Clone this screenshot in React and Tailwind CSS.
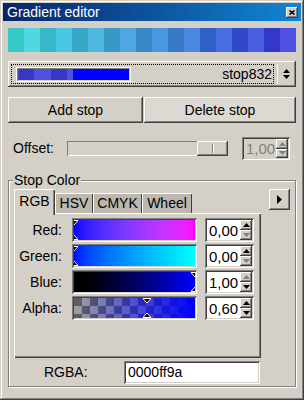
const raised =
  "shadow-[inset_-1px_-1px_0_#404040,inset_1px_1px_0_#ffffff,inset_-2px_-2px_0_#808080,inset_2px_2px_0_#d4d0c8]";
const sunken =
  "shadow-[inset_1px_1px_0_#808080,inset_-1px_-1px_0_#ffffff,inset_2px_2px_0_#404040,inset_-2px_-2px_0_#d4d0c8]";

const stripColors = [
  "#38c8c8", "#50d8e0", "#38b8c8", "#48c8e0", "#38a8c8", "#50b8e0",
  "#3898c8", "#50a8e0", "#3888c8", "#4898e0", "#3878c8", "#4888e0",
  "#3060c8", "#4870e0", "#3048c8", "#4860e0", "#3438c8", "#5050e0",
];

function Arrow({ up, grey }) {
  return (
    <svg width="7" height="4" viewBox="0 0 7 4">
      <polygon
        points={up ? "3.5,0 7,4 0,4" : "0,0 7,0 3.5,4"}
        fill={grey ? "#808080" : "#000"}
      />
    </svg>
  );
}

function SpinBox({ value, upGrey, downGrey, disabled, w = "w-[49px]", h = "h-[24px]" }) {
  return (
    <div className={`flex ${w} ${h} p-[2px] ${sunken} ${disabled ? "bg-[#d4d0c8] text-[#808080]" : "bg-white text-black"}`}>
      <div className="flex-1 flex items-center pl-[2px] text-[15px] leading-none">{value}</div>
      <div className="flex flex-col w-[12px]">
        <div className={`flex-1 flex items-center justify-center bg-[#d4d0c8] ${raised}`}>
          <Arrow up grey={disabled || upGrey} />
        </div>
        <div className={`flex-1 flex items-center justify-center bg-[#d4d0c8] ${raised}`}>
          <Arrow grey={disabled || downGrey} />
        </div>
      </div>
    </div>
  );
}

function Marker({ pos }) {
  return (
    <>
      <svg className="absolute top-0 -translate-x-1/2" style={{ left: pos }} width="9" height="6" viewBox="0 0 9 6">
        <polygon points="0.5,0.5 8.5,0.5 4.5,5" fill="#000" stroke="#fff" strokeWidth="1" />
      </svg>
      <svg className="absolute bottom-0 -translate-x-1/2" style={{ left: pos }} width="9" height="6" viewBox="0 0 9 6">
        <polygon points="4.5,1 8.5,5.5 0.5,5.5" fill="#000" stroke="#fff" strokeWidth="1" />
      </svg>
    </>
  );
}

function ColorRow({ label, bar, pos, spin }) {
  return (
    <div className="flex items-center h-[24px]">
      <div className="w-[48px] text-right text-[14px]">{label}</div>
      <div className={`ml-[10px] w-[125px] h-[24px] p-[2px] ${sunken}`}>
        <div className="relative w-full h-full overflow-hidden">
          {bar}
          <Marker pos={pos} />
        </div>
      </div>
      <div className="ml-[8px]">{spin}</div>
    </div>
  );
}

export default function App() {
  return (
    <div
      className={`w-[304px] h-[400px] bg-[#d4d0c8] p-[3px] flex flex-col text-black shadow-[inset_-1px_-1px_0_#404040,inset_1px_1px_0_#d4d0c8,inset_-2px_-2px_0_#808080,inset_2px_2px_0_#ffffff]`}
      style={{ fontFamily: '"Liberation Sans", Arial, sans-serif' }}
    >
      {/* title bar */}
      <div className="h-[18px] flex items-center justify-between pl-[4px] pr-[3px] bg-gradient-to-r from-[#0a246a] to-[#1286d4]">
        <span className="text-white text-[14px] leading-none">Gradient editor</span>
        <div className={`w-[12px] h-[11px] flex items-center justify-center bg-[#d4d0c8] ${raised}`}>
          <svg width="6" height="5" viewBox="0 0 6 5">
            <path d="M0.5 0.5 L5.5 4.5 M5.5 0.5 L0.5 4.5" stroke="#000" strokeWidth="1.6" />
          </svg>
        </div>
      </div>

      <div className="flex-1 flex flex-col px-[5px] pt-[7px]">
        {/* gradient stops strip */}
        <div className="flex h-[24px]">
          {stripColors.map((c, i) => (
            <div key={i} className="w-[16px] h-full" style={{ backgroundColor: c }} />
          ))}
        </div>

        {/* stop combo */}
        <div className={`mt-[9px] h-[26px] flex items-center bg-[#d4d0c8] ${raised}`}>
          <div className="ml-[3px] w-[263px] h-[20px] border border-dotted border-black flex items-center">
            <div className="ml-[4px] w-[115px] h-[15px] border border-white shadow-[inset_1px_1px_0_#808080] p-[1px] flex">
              <div className="w-[1px] bg-[#4848d8]" />
              <div className="w-[15px] bg-[#3838c8]" />
              <div className="w-[17px] bg-[#5050e0]" />
              <div className="w-[16px] bg-[#3838c8]" />
              <div className="w-[6px] bg-[#5050e0]" />
              <div className="flex-1 bg-[#0000ff]" />
            </div>
            <span className="ml-auto pr-[1px] text-[14px]">stop832</span>
          </div>
          <div className="ml-[3px] w-[1px] h-[20px] bg-white" />
          <div className="flex-1 flex flex-col items-center justify-center gap-[2px] pr-[2px]">
            <Arrow up />
            <Arrow />
          </div>
        </div>

        {/* buttons */}
        <div className="mt-[10px] flex gap-[1px] h-[26px]">
          <button className={`w-[135px] h-full text-[14px] bg-[#d4d0c8] ${raised}`}>Add stop</button>
          <button className={`flex-1 h-full text-[14px] bg-[#dcd9d2] ${raised}`}>Delete stop</button>
        </div>

        {/* offset */}
        <div className="mt-[14px] flex items-center h-[23px]">
          <span className="pl-[5px] w-[59px] text-[14px] text-black">Offset:</span>
          <div className="w-[161px] h-[15px] bg-[#d4d0c8] shadow-[inset_1px_1px_0_#808080,inset_-1px_-1px_0_#ffffff] flex justify-end">
            <div className={`w-[31px] h-full bg-[#d4d0c8] ${raised} flex items-center justify-center`}>
              <div className="w-[1px] h-[9px] bg-[#808080] shadow-[1px_0_0_#ffffff]" />
            </div>
          </div>
          <div className="ml-[14px]">
            <SpinBox value="1,00" disabled w="w-[48px]" h="h-[23px]" />
          </div>
        </div>

        {/* stop color group */}
        <div className="relative mt-[20px] h-[207px] border border-[#808080] shadow-[inset_1px_1px_0_#ffffff,1px_1px_0_#ffffff] pl-[5px] flex flex-col">
          <span className="absolute -top-[9px] left-[4px] px-[1px] bg-[#d4d0c8] text-[14px] leading-[16px]">Stop Color</span>

          <div className="flex mt-[8px]">
            <div className="w-[247px] flex flex-col">
              {/* tabs */}
              <div className="flex items-end h-[24px]">
                <div className="relative z-10 w-[41px] h-[26px] -mb-[2px] bg-[#d4d0c8] shadow-[inset_1px_1px_0_#ffffff,inset_-1px_0_0_#404040,inset_-2px_0_0_#808080] flex items-center justify-center text-[14px] pb-[2px]">RGB</div>
                <div className="w-[38px] h-[20px] bg-[#bcb8b0] shadow-[inset_1px_1px_0_#ffffff,inset_-1px_0_0_#404040] flex items-center justify-center text-[14px]">HSV</div>
                <div className="w-[49px] h-[20px] bg-[#bcb8b0] shadow-[inset_1px_1px_0_#ffffff,inset_-1px_0_0_#404040] flex items-center justify-center text-[14px]">CMYK</div>
                <div className="w-[50px] h-[20px] bg-[#bcb8b0] shadow-[inset_1px_1px_0_#ffffff,inset_-1px_0_0_#404040] flex items-center justify-center text-[14px]">Wheel</div>
              </div>
              {/* pane */}
              <div className="h-[145px] bg-[#d4d0c8] shadow-[inset_1px_1px_0_#ffffff,inset_-1px_-1px_0_#404040,inset_-2px_-2px_0_#808080] pt-[5px] flex flex-col gap-[2px]">
                <ColorRow
                  label="Red:"
                  pos="0%"
                  bar={<div className="w-full h-full bg-gradient-to-r from-[#0000ff] to-[#ff00ff]" />}
                  spin={<SpinBox value="0,00" downGrey />}
                />
                <ColorRow
                  label="Green:"
                  pos="0%"
                  bar={<div className="w-full h-full bg-gradient-to-r from-[#0000ff] to-[#00ffff]" />}
                  spin={<SpinBox value="0,00" downGrey />}
                />
                <ColorRow
                  label="Blue:"
                  pos="100%"
                  bar={<div className="w-full h-full bg-gradient-to-r from-[#000000] to-[#0000ff]" />}
                  spin={<SpinBox value="1,00" upGrey />}
                />
                <ColorRow
                  label="Alpha:"
                  pos="60%"
                  bar={
                    <div className="w-full h-full bg-[repeating-conic-gradient(#a0a0a0_0_25%,#606060_0_50%)] bg-[length:16px_16px]">
                      <div className="w-full h-full bg-gradient-to-r from-[#0000ff00] to-[#0000ff]" />
                    </div>
                  }
                  spin={<SpinBox value="0,60" />}
                />
              </div>
            </div>
            <div className={`ml-[8px] w-[21px] h-[21px] bg-[#d4d0c8] ${raised} flex items-center justify-center`}>
              <svg width="5" height="9" viewBox="0 0 5 9">
                <polygon points="0,0 5,4.5 0,9" fill="#000" />
              </svg>
            </div>
          </div>

          {/* RGBA */}
          <div className="mt-[3px] flex items-center h-[23px]">
            <span className="ml-[30px] w-[80px] text-[14px]">RGBA:</span>
            <div className={`w-[136px] h-[23px] bg-white ${sunken} flex items-center pl-[4px] text-[14px]`}>0000ff9a</div>
          </div>
        </div>
      </div>
    </div>
  );
}
